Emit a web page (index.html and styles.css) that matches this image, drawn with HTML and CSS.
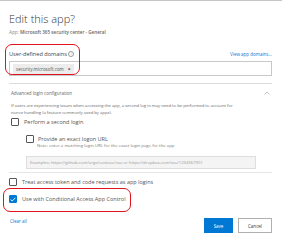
FILE: index.html
```html
<!DOCTYPE html>
<html lang="en">
<head>
  <meta charset="UTF-8" />
  <meta name="viewport" content="width=device-width, initial-scale=1.0"/>
  <title>Edit this app?</title>
  <link rel="stylesheet" href="styles.css">
</head>
<body>
  <div class="dialog">
    <h1 class="title">Edit this app?</h1>
    <p class="subtitle">App: <b>Microsoft 365 security center - General</b></p>

    <div class="domains">
      <div class="field-head">
        <span class="label">User-defined domains <span class="info">i</span></span>
        <a class="link" href="#">View app domains...</a>
      </div>
      <div class="input">
        <span class="tag">security.microsoft.com <span class="tag-x">&times;</span></span>
      </div>
      <span class="callout callout-domains"></span>
    </div>

    <section class="advanced">
      <div class="adv-head">
        <span>Advanced login configuration</span>
        <svg class="chevron" width="6" height="4" viewBox="0 0 6 4"><path d="M0.5 3.5 L3 1 L5.5 3.5" fill="none" stroke="#aaa" stroke-width="0.7"/></svg>
      </div>
      <p class="help">If users are experiencing issues when accessing the app, a second log in may need to be performed to account for<br>nonce handling (a feature commonly used by apps).</p>

      <label class="check check-main"><span class="box"></span>Perform a second login</label>

      <div class="nested">
        <label class="check"><span class="box"></span>Provide an exact logon URL</label>
        <p class="note">Note: enter a matching login URL for the exact login page for the app</p>
        <div class="input input-disabled">Examples: https://github.com/orgs/contoso/sso or https://dropbox.com/sso/1234567901</div>
      </div>
    </section>

    <label class="check check-main"><span class="box"></span>Treat access token and code requests as app logins</label>

    <div class="conditional">
      <label class="check check-main"><span class="box box-checked"><svg width="6" height="5" viewBox="0 0 6 5"><path d="M0.6 2.6 L2.2 4 L5.4 0.8" fill="none" stroke="#fff" stroke-width="0.9"/></svg></span>Use with Conditional Access App Control</label>
      <span class="callout callout-conditional"></span>
    </div>

    <div class="footer">
      <a class="link clear" href="#">Clear all</a>
      <div class="buttons">
        <button class="btn btn-primary">Save</button>
        <button class="btn">Cancel</button>
      </div>
    </div>
  </div>
</body>
</html>
```

FILE: styles.css
```css
body {
  margin: 0;
  font-family: 'Open Sans', 'Noto Sans', sans-serif;
  color: #444;
  background: #fff;
}
.dialog {
  border-top: 1px solid #c6c6c6;
  padding: 0 10px 0 9px;
  height: 243px;
}
.title {
  font-size: 11px;
  font-weight: 300;
  line-height: 14px;
  color: #333;
  margin: 11px 0 0 0;
}
.subtitle {
  font-size: 4.6px;
  line-height: 6px;
  color: #888;
  margin: 3px 0 0 0;
}
.subtitle b {
  font-weight: 600;
  color: #666;
}
.domains {
  position: relative;
  margin-top: 15px;
}
.field-head {
  display: flex;
  justify-content: space-between;
  align-items: center;
  height: 8px;
}
.label {
  font-size: 5.6px;
  color: #444;
}
.info {
  display: inline-block;
  width: 4px;
  height: 4px;
  border: 0.6px solid #999;
  border-radius: 50%;
  font-size: 3px;
  line-height: 4px;
  text-align: center;
  color: #999;
  vertical-align: 1px;
}
.link {
  font-size: 4.5px;
  color: #0078d4;
  text-decoration: none;
}
.input {
  border: 1px solid #c8c8c8;
  height: 13px;
  margin-top: 3px;
  display: flex;
  align-items: center;
  padding: 0 3px;
}
.tag {
  background: #ececec;
  font-size: 4.5px;
  color: #555;
  padding: 2px 3px;
  display: flex;
  align-items: center;
  gap: 4px;
}
.tag-x {
  font-size: 5px;
  font-weight: 700;
  color: #444;
}
.callout {
  position: absolute;
  border: 1.6px solid #e0121c;
  border-radius: 7px;
  pointer-events: none;
}
.callout-domains {
  left: -4px;
  top: -6px;
  width: 73px;
  height: 29px;
}
.advanced {
  margin-top: 7px;
  border-top: 1px solid #dcdcdc;
  border-bottom: 1px solid #e6e6e6;
  padding: 5px 0 3px 2px;
}
.adv-head {
  display: flex;
  justify-content: space-between;
  align-items: center;
  font-size: 4.5px;
  color: #666;
  height: 7px;
  padding-right: 2px;
}
.help {
  font-size: 4.2px;
  line-height: 7px;
  color: #666;
  margin: 6px 0 0 0;
}
.check {
  display: flex;
  align-items: center;
  gap: 4px;
  font-size: 5.5px;
  color: #555;
}
.check-main {
  gap: 5px;
}
.advanced .check-main {
  margin-top: 2px;
}
.box {
  width: 6px;
  height: 6px;
  border: 1px solid #555;
  border-radius: 1px;
  flex: none;
  display: flex;
  align-items: center;
  justify-content: center;
}
.box-checked {
  background: #0078d4;
  border-color: #0078d4;
}
.nested {
  padding-left: 15px;
  margin-top: 9px;
}
.note {
  font-size: 4.3px;
  line-height: 6px;
  color: #777;
  margin: -1px 0 0 11px;
}
.input-disabled {
  background: #f4f4f4;
  border-color: #dedede;
  height: 11px;
  margin-top: 8px;
  width: 222px;
  font-size: 4.2px;
  color: #999;
}
.dialog > .check-main {
  margin-top: 5px;
}
.conditional {
  position: relative;
  margin-top: 9px;
}
.callout-conditional {
  left: -6px;
  top: -7px;
  width: 126px;
  height: 22px;
}
.footer {
  display: flex;
  justify-content: space-between;
  align-items: flex-start;
  margin-top: 15px;
}
.clear {
  padding-left: 1px;
}
.buttons {
  display: flex;
  gap: 5px;
}
.btn {
  height: 15px;
  width: 34px;
  border: 1px solid #b0b0b0;
  background: #fff;
  font-family: inherit;
  font-size: 4.5px;
  color: #333;
  padding: 0;
}
.btn-primary {
  width: 29px;
  background: #0078d4;
  border-color: #0078d4;
  color: #fff;
}
```
